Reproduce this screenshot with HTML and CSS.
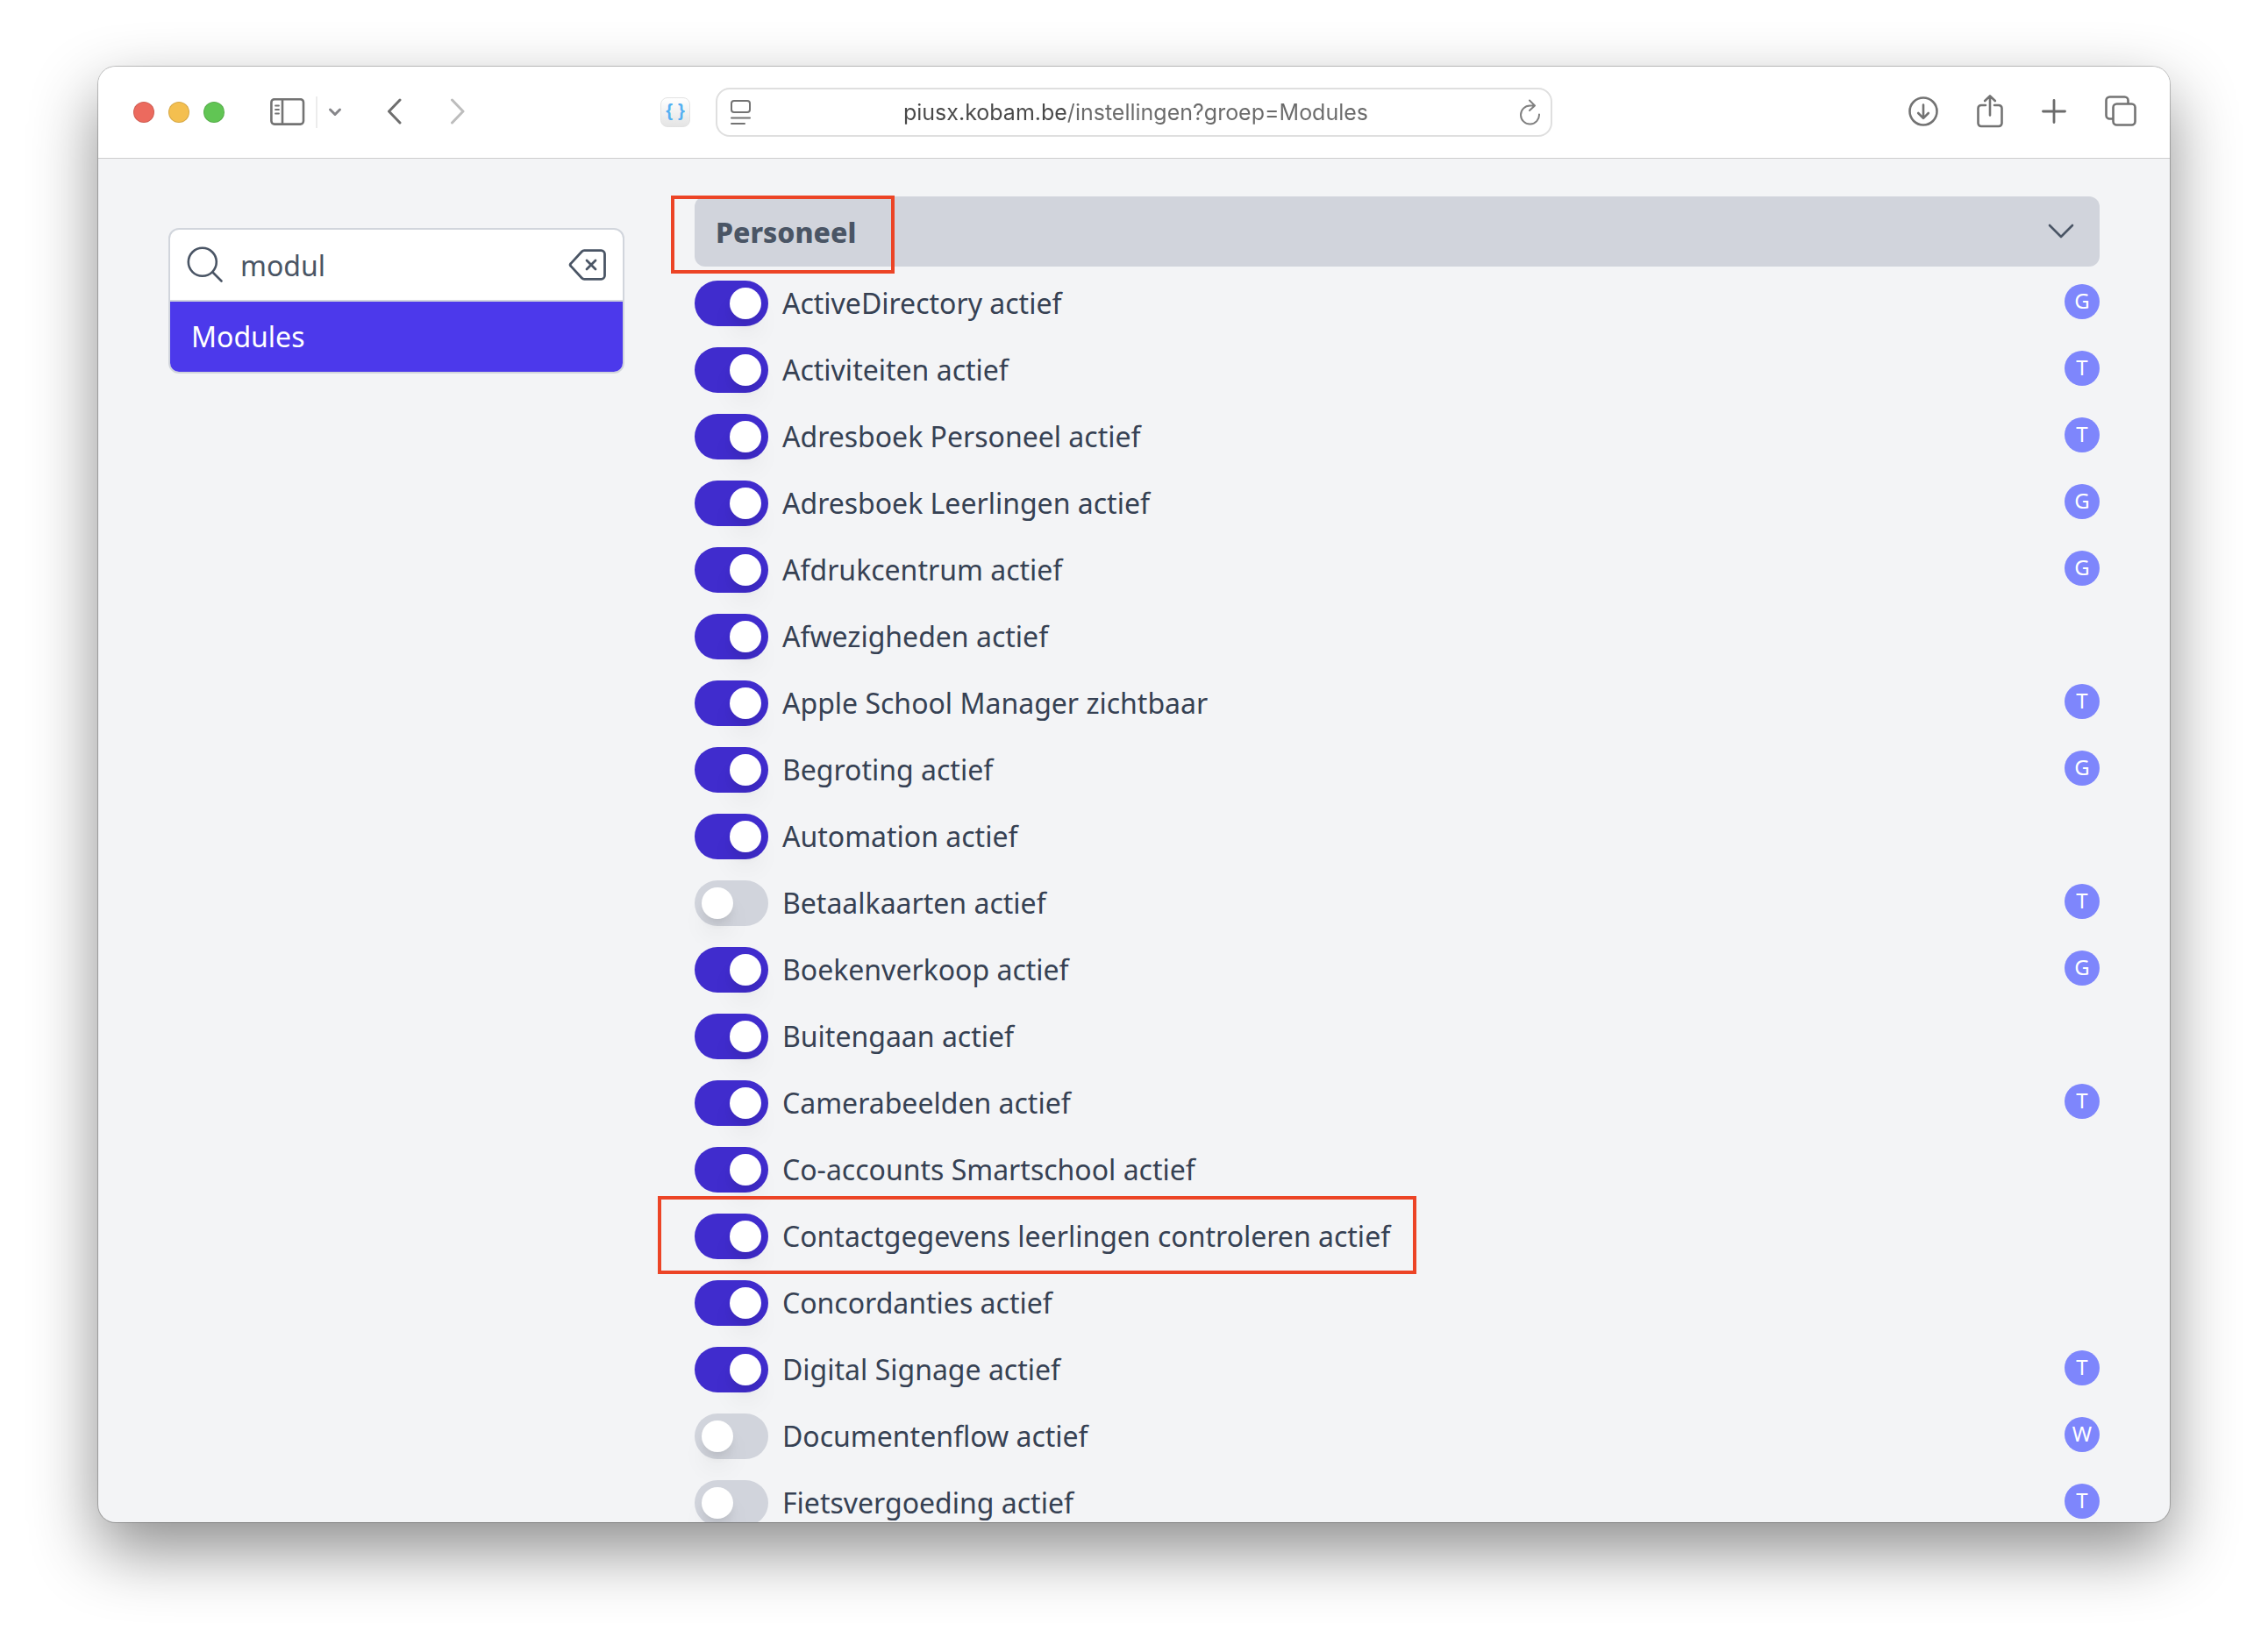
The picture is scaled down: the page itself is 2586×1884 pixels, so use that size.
FILE: index.html
```
<!DOCTYPE html>
<html lang="nl">
<head>
  <meta charset="UTF-8">
  <meta name="viewport" content="width=device-width, initial-scale=1.0">
  <title>Instellingen - Modules</title>
  <link rel="stylesheet" href="styles.css">
</head>
<body>
<div class="window">
  <header class="toolbar">
    <div class="toolbar-left">
      <div class="lights">
        <button type="button" class="light light-close" aria-label="Sluiten"></button>
        <button type="button" class="light light-min" aria-label="Minimaliseren"></button>
        <button type="button" class="light light-max" aria-label="Maximaliseren"></button>
      </div>
      <div class="sidebar-tools">
        <button type="button" aria-label="Zijbalk">
          <svg width="40" height="32" viewBox="0 0 40 32" fill="none" stroke="#737373" stroke-width="2.6" stroke-linecap="round">
            <rect x="1.4" y="1.2" width="36.6" height="28.4" rx="3.5"/>
            <path d="M14 2v27"/>
            <path stroke-width="1.8" d="M6 8.500h4M6 13h4M6 17.500h4"/>
          </svg>
        </button>
        <span class="divider"></span>
        <button type="button" aria-label="Tabgroepen">
          <svg width="16" height="12" viewBox="0 0 16 12" fill="none" stroke="#86868a" stroke-width="3" stroke-linecap="round" stroke-linejoin="round"><path d="M2.500 3l5.500 5.500L13.500 3"/></svg>
        </button>
      </div>
      <button type="button" aria-label="Vorige">
        <svg width="20" height="32" viewBox="0 0 20 32" fill="none" stroke="#6e6e6e" stroke-width="3" stroke-linecap="round" stroke-linejoin="round"><path d="M14 2L1.500 15 14 28"/></svg>
      </button>
      <button type="button" aria-label="Volgende" disabled>
        <svg width="20" height="32" viewBox="0 0 20 32" fill="none" stroke="#bdbdbd" stroke-width="3" stroke-linecap="round" stroke-linejoin="round"><path d="M1.500 2L14 15 1.500 28"/></svg>
      </button>
      <button type="button" class="extension" aria-label="Extensie"><span>{</span><span>}</span></button>
    </div>
    <div class="address">
      <button type="button" aria-label="Paginamenu">
        <svg width="24" height="30" viewBox="0 0 24 30" fill="none" stroke="#737373" stroke-width="2" stroke-linecap="round"><rect x="1" y="2" width="21" height="13" rx="3"/><path d="M1 21.500h21M1 28h15"/></svg>
      </button>
      <input type="text" class="url" aria-label="Adres" value="piusx.kobam.be/instellingen?groep=Modules">
      <button type="button" aria-label="Herladen">
        <svg width="24" height="30" viewBox="0 0 24 30" fill="none" stroke="#808080" stroke-width="2" stroke-linecap="round" stroke-linejoin="round"><path d="M22 17.500A10.500 10.500 0 1 1 11.500 7.500h5.500M11 1.500l6 6-6 5.500"/></svg>
      </button>
    </div>
    <div class="toolbar-right">
      <button type="button" aria-label="Downloads">
        <svg width="34" height="36" viewBox="0 0 34 36" fill="none" stroke="#737373" stroke-width="2.600" stroke-linecap="round" stroke-linejoin="round"><circle cx="17" cy="17" r="15.500"/><path d="M17 9.500v15M11.200 19l5.800 5.800 5.800-5.800"/></svg>
      </button>
      <button type="button" aria-label="Delen">
        <svg width="30" height="40" viewBox="0 0 30 40" fill="none" stroke="#737373" stroke-width="2.600" stroke-linecap="round" stroke-linejoin="round"><path d="M10 12H5a3.500 3.500 0 0 0-3.500 3.500v17A3.500 3.500 0 0 0 5 36h20a3.500 3.500 0 0 0 3.500-3.500v-17A3.500 3.500 0 0 0 25 12h-5M15 23.500V2M9.200 7L15 1.400 20.800 7"/></svg>
      </button>
      <button type="button" aria-label="Nieuw tabblad">
        <svg width="28" height="30" viewBox="0 0 28 30" fill="none" stroke="#6b6b6b" stroke-width="2.800" stroke-linecap="round"><path d="M14 1.500v25M1.500 14h25"/></svg>
      </button>
      <button type="button" aria-label="Tabbladoverzicht">
        <svg width="36" height="38" viewBox="0 0 36 38" fill="none" stroke="#737373" stroke-width="2.600" stroke-linejoin="round"><rect x="9.500" y="9.500" width="25" height="24" rx="4"/><path d="M9.500 26.500H5.500a4 4 0 0 1-4-4V5.500a4 4 0 0 1 4-4h17a4 4 0 0 1 4 4v4"/></svg>
      </button>
    </div>
  </header>

  <div class="content">
    <aside class="sidebar">
      <div class="search-box">
        <div class="search-field">
          <svg width="44" height="44" viewBox="0 0 44 44" fill="none" stroke="#4a5565" stroke-width="2.600" stroke-linecap="round"><circle cx="18.800" cy="18.800" r="16"/><path d="M30.500 30.500L40.500 40.500"/></svg>
          <input type="text" aria-label="Zoeken" value="modul">
          <button type="button" aria-label="Wissen">
            <svg width="44" height="36" viewBox="0 0 44 36" fill="none" stroke="#4a5565" stroke-width="2.800" stroke-linecap="round" stroke-linejoin="round"><path d="M2.800 16.600L15.300 3a4 4 0 0 1 3-1.300H37.500a4 4 0 0 1 4 4v24.600a4 4 0 0 1-4 4H18.300a4 4 0 0 1-3-1.300L2.800 19.400a2 2 0 0 1 0-2.800z"/><path d="M21 13l10 10M31 13L21 23"/></svg>
          </button>
        </div>
        <a href="#modules" class="search-result">Modules</a>
      </div>
    </aside>

    <main class="settings" id="modules">
      <button type="button" class="group-header" aria-expanded="true">
        <span class="marked marked-title">Personeel</span>
        <svg width="32" height="20" viewBox="0 0 32 20" fill="none" stroke="#4a5565" stroke-width="2.600" stroke-linecap="round" stroke-linejoin="round"><path d="M3 3l13 13L29 3"/></svg>
      </button>
      <ul class="modules">
        <li><label><input type="checkbox" role="switch" checked>ActiveDirectory actief</label><span class="badge">G</span></li>
        <li><label><input type="checkbox" role="switch" checked>Activiteiten actief</label><span class="badge">T</span></li>
        <li><label><input type="checkbox" role="switch" checked>Adresboek Personeel actief</label><span class="badge">T</span></li>
        <li><label><input type="checkbox" role="switch" checked>Adresboek Leerlingen actief</label><span class="badge">G</span></li>
        <li><label><input type="checkbox" role="switch" checked>Afdrukcentrum actief</label><span class="badge">G</span></li>
        <li><label><input type="checkbox" role="switch" checked>Afwezigheden actief</label></li>
        <li><label><input type="checkbox" role="switch" checked>Apple School Manager zichtbaar</label><span class="badge">T</span></li>
        <li><label><input type="checkbox" role="switch" checked>Begroting actief</label><span class="badge">G</span></li>
        <li><label><input type="checkbox" role="switch" checked>Automation actief</label></li>
        <li><label><input type="checkbox" role="switch">Betaalkaarten actief</label><span class="badge">T</span></li>
        <li><label><input type="checkbox" role="switch" checked>Boekenverkoop actief</label><span class="badge">G</span></li>
        <li><label><input type="checkbox" role="switch" checked>Buitengaan actief</label></li>
        <li><label><input type="checkbox" role="switch" checked>Camerabeelden actief</label><span class="badge">T</span></li>
        <li><label><input type="checkbox" role="switch" checked>Co-accounts Smartschool actief</label></li>
        <li><label class="marked marked-row"><input type="checkbox" role="switch" checked>Contactgegevens leerlingen controleren actief</label></li>
        <li><label><input type="checkbox" role="switch" checked>Concordanties actief</label></li>
        <li><label><input type="checkbox" role="switch" checked>Digital Signage actief</label><span class="badge">T</span></li>
        <li><label><input type="checkbox" role="switch">Documentenflow actief</label><span class="badge">W</span></li>
        <li><label><input type="checkbox" role="switch">Fietsvergoeding actief</label><span class="badge">T</span></li>
      </ul>
    </main>
  </div>
</div>
</body>
</html>
```
FILE: styles.css
```
* {
  box-sizing: border-box;
}

body {
  margin: 0;
  height: 100vh;
  padding: 76px 112px 148px;
  background-color: #fff;
  font-family: "Noto Sans", sans-serif;
  font-size: 32px;
  color: #364153;
}

button {
  padding: 0;
  border: none;
  background: none;
  font: inherit;
  color: inherit;
  cursor: pointer;
}

svg {
  display: block;
  flex-shrink: 0;
}

.window {
  display: flex;
  flex-direction: column;
  height: 100%;
  overflow: hidden;
  background-color: #f3f4f6;
  border-radius: 20px;
  box-shadow: 0 0 0 1px rgba(0, 0, 0, 0.22), 0 32px 76px rgba(0, 0, 0, 0.45);
}

/* browser toolbar */
.toolbar {
  display: grid;
  grid-template-columns: minmax(0, 1fr) minmax(0, 954px) minmax(0, 1fr);
  align-items: center;
  flex-shrink: 0;
  height: 105px;
  background-color: #fff;
  border-bottom: 1px solid #cdcdcd;
}

.toolbar-left {
  display: flex;
  align-items: center;
  gap: 52px;
  padding: 0 29px 0 40px;
}

.lights {
  display: flex;
  gap: 16px;
}

.light {
  width: 24px;
  height: 24px;
  border-radius: 50%;
  border: 1px solid rgba(0, 0, 0, 0.12);
}

.light-close {
  background-color: #ec6a5e;
}

.light-min {
  background-color: #f4bf4f;
}

.light-max {
  background-color: #61c554;
}

.sidebar-tools {
  display: flex;
  align-items: center;
  gap: 12px;
}

.divider {
  width: 2px;
  height: 36px;
  background-color: #ececec;
}

.extension {
  display: flex;
  justify-content: center;
  gap: 6px;
  width: 34px;
  height: 34px;
  margin-left: auto;
  border: 1px solid #e2e2e2;
  border-radius: 8px;
  background: linear-gradient(#fff, #e4e4e4);
  font-family: "Liberation Sans", sans-serif;
  font-size: 20px;
  font-weight: bold;
  line-height: 29px;
  color: #55b0f2;
}

.address {
  display: flex;
  align-items: center;
  height: 56px;
  padding: 0 11px 0 15px;
  border: 2px solid #dfdfdf;
  border-radius: 16px;
}

/* domain is darker than the path after it */
.url {
  flex: 1;
  min-width: 0;
  padding: 0;
  border: none;
  outline: none;
  background: linear-gradient(90deg, #484848 41%, #6a6a6a 41%);
  background-clip: text;
  -webkit-background-clip: text;
  color: transparent;
  font-family: Inter, sans-serif;
  font-size: 25px;
  text-align: center;
}

.toolbar-right {
  display: flex;
  align-items: center;
  justify-content: flex-end;
  gap: 44px;
  padding-right: 38px;
}

/* page */
.content {
  display: flex;
  flex: 1;
  min-height: 0;
  gap: 80px;
  padding: 43px 80px 0;
  overflow: hidden;
}

.sidebar {
  flex: 0 0 520px;
  min-width: 0;
  padding-top: 36px;
}

.search-box {
  overflow: hidden;
  background-color: #fff;
  border: 2px solid #d1d5dc;
  border-radius: 12px;
}

.search-field {
  display: flex;
  align-items: center;
  gap: 18px;
  height: 82px;
  padding: 0 18px;
  border-bottom: 2px solid #d1d5dc;
}

.search-field input {
  flex: 1;
  width: 100%;
  min-width: 0;
  padding: 0;
  border: none;
  outline: none;
  background: none;
  font: inherit;
  color: #4a5565;
}

.search-result {
  display: block;
  padding: 0 24px;
  line-height: 80px;
  background-color: #4c39eb;
  color: #fff;
  text-decoration: none;
}

.settings {
  flex: 1;
  min-width: 0;
}

.group-header {
  display: flex;
  align-items: center;
  justify-content: space-between;
  width: 100%;
  height: 80px;
  padding: 0 28px 0 24px;
  border-radius: 12px;
  background-color: #d1d4dc;
  color: #4a5565;
  font-weight: 800;
}

.modules {
  display: flex;
  flex-direction: column;
  gap: 24px;
  margin: 16px 0 0;
  padding: 0;
  list-style: none;
}

.modules li {
  display: flex;
  align-items: flex-start;
  justify-content: space-between;
}

.modules label {
  display: flex;
  gap: 16px;
  line-height: 52px;
}

.modules input {
  appearance: none;
  flex-shrink: 0;
  width: 84px;
  height: 52px;
  margin: 0;
  padding: 8px;
  border-radius: 26px;
  background-color: #d1d4dc;
  cursor: pointer;
}

.modules input::before {
  content: "";
  display: block;
  width: 36px;
  height: 36px;
  border-radius: 50%;
  background-color: #fff;
  box-shadow: 0 20px 30px -6px rgba(0, 0, 0, 0.1), 0 8px 12px -4px rgba(0, 0, 0, 0.1);
}

.modules input:checked {
  background-color: #402ccd;
}

.modules input:checked::before {
  margin-left: auto;
}

.badge {
  width: 40px;
  height: 40px;
  margin-top: 4px;
  border-radius: 50%;
  background-color: #7e86fc;
  color: #fff;
  font-size: 24px;
  line-height: 38px;
  text-align: center;
}

/* red frames drawn over the page */
.marked {
  position: relative;
}

.marked::after {
  content: "";
  position: absolute;
  border: 4px solid #ec4426;
  pointer-events: none;
}

.marked-title::after {
  inset: -20px -44px -26px -51px;
}

.marked-row::after {
  inset: -20px -30px -17px -42px;
}
```
